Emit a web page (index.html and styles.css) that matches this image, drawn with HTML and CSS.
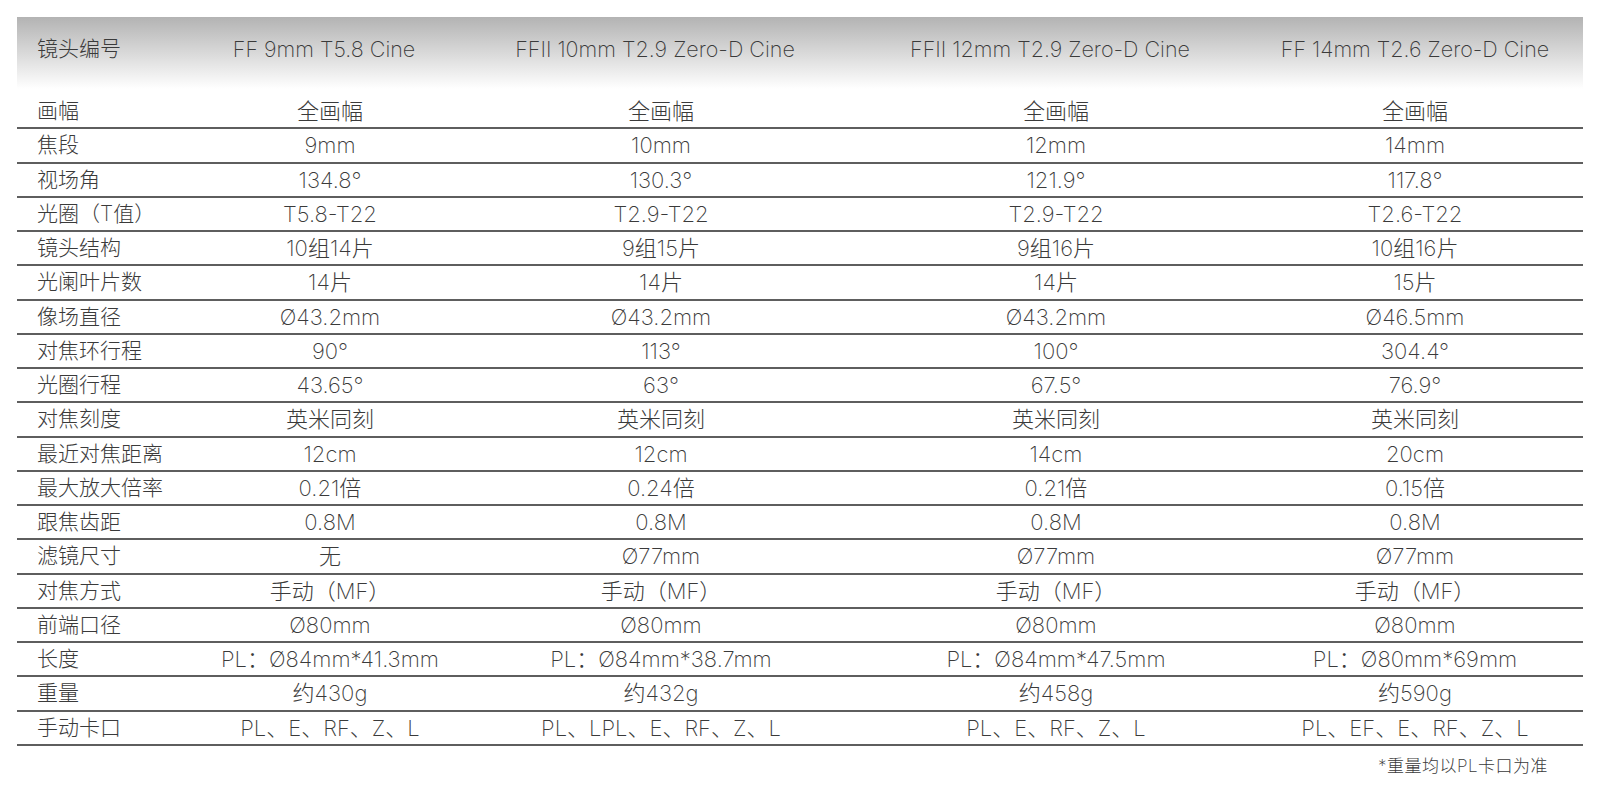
FILE: index.html
```html
<!DOCTYPE html>
<html lang="zh-CN">
<head>
<meta charset="utf-8">
<title>镜头参数</title>
<link rel="stylesheet" href="styles.css">
</head>
<body>
<div class="page">
  <div class="spec">
    <div class="row head">
      <div class="label">镜头编号</div>
      <div class="cell">FF 9mm T5.8 Cine</div>
      <div class="cell">FFII 10mm T2.9 Zero-D Cine</div>
      <div class="cell">FFII 12mm T2.9 Zero-D Cine</div>
      <div class="cell last">FF 14mm T2.6 Zero-D Cine</div>
    </div>
    <div class="row"><div class="label">画幅</div><div class="cell">全画幅</div><div class="cell">全画幅</div><div class="cell">全画幅</div><div class="cell">全画幅</div></div>
    <div class="row"><div class="label">焦段</div><div class="cell">9mm</div><div class="cell">10mm</div><div class="cell">12mm</div><div class="cell">14mm</div></div>
    <div class="row"><div class="label">视场角</div><div class="cell">134.8°</div><div class="cell">130.3°</div><div class="cell">121.9°</div><div class="cell">117.8°</div></div>
    <div class="row"><div class="label">光圈（T值）</div><div class="cell">T5.8-T22</div><div class="cell">T2.9-T22</div><div class="cell">T2.9-T22</div><div class="cell">T2.6-T22</div></div>
    <div class="row"><div class="label">镜头结构</div><div class="cell">10组14片</div><div class="cell">9组15片</div><div class="cell">9组16片</div><div class="cell">10组16片</div></div>
    <div class="row"><div class="label">光阑叶片数</div><div class="cell">14片</div><div class="cell">14片</div><div class="cell">14片</div><div class="cell">15片</div></div>
    <div class="row"><div class="label">像场直径</div><div class="cell">Ø43.2mm</div><div class="cell">Ø43.2mm</div><div class="cell">Ø43.2mm</div><div class="cell">Ø46.5mm</div></div>
    <div class="row"><div class="label">对焦环行程</div><div class="cell">90°</div><div class="cell">113°</div><div class="cell">100°</div><div class="cell">304.4°</div></div>
    <div class="row"><div class="label">光圈行程</div><div class="cell">43.65°</div><div class="cell">63°</div><div class="cell">67.5°</div><div class="cell">76.9°</div></div>
    <div class="row"><div class="label">对焦刻度</div><div class="cell">英米同刻</div><div class="cell">英米同刻</div><div class="cell">英米同刻</div><div class="cell">英米同刻</div></div>
    <div class="row"><div class="label">最近对焦距离</div><div class="cell">12cm</div><div class="cell">12cm</div><div class="cell">14cm</div><div class="cell">20cm</div></div>
    <div class="row"><div class="label">最大放大倍率</div><div class="cell">0.21倍</div><div class="cell">0.24倍</div><div class="cell">0.21倍</div><div class="cell">0.15倍</div></div>
    <div class="row"><div class="label">跟焦齿距</div><div class="cell">0.8M</div><div class="cell">0.8M</div><div class="cell">0.8M</div><div class="cell">0.8M</div></div>
    <div class="row"><div class="label">滤镜尺寸</div><div class="cell">无</div><div class="cell">Ø77mm</div><div class="cell">Ø77mm</div><div class="cell">Ø77mm</div></div>
    <div class="row"><div class="label">对焦方式</div><div class="cell">手动（MF）</div><div class="cell">手动（MF）</div><div class="cell">手动（MF）</div><div class="cell">手动（MF）</div></div>
    <div class="row"><div class="label">前端口径</div><div class="cell">Ø80mm</div><div class="cell">Ø80mm</div><div class="cell">Ø80mm</div><div class="cell">Ø80mm</div></div>
    <div class="row"><div class="label">长度</div><div class="cell">PL：Ø84mm*41.3mm</div><div class="cell">PL：Ø84mm*38.7mm</div><div class="cell">PL：Ø84mm*47.5mm</div><div class="cell">PL：Ø80mm*69mm</div></div>
    <div class="row"><div class="label">重量</div><div class="cell">约430g</div><div class="cell">约432g</div><div class="cell">约458g</div><div class="cell">约590g</div></div>
    <div class="row"><div class="label">手动卡口</div><div class="cell">PL、E、RF、Z、L</div><div class="cell">PL、LPL、E、RF、Z、L</div><div class="cell">PL、E、RF、Z、L</div><div class="cell">PL、EF、E、RF、Z、L</div></div>
  </div>
  <p class="note">*重量均以PL卡口为准</p>
</div>
</body>
</html>
```
FILE: styles.css
```css
html, body {
  margin: 0;
  padding: 0;
  background: #fff;
}
body {
  font-family: "Inter", "Noto Sans CJK SC", sans-serif;
  font-weight: 200;
  color: #3a3a3a;
}
.page {
  padding: 17px 17px 0 17px;
}
.spec {
  width: 1566px;
}
.row {
  display: grid;
  grid-template-columns: 186px 254px 408px 382px 336px;
  height: 34.26px;
  box-sizing: border-box;
  border-bottom: 2px solid #5e5e5e;
  align-items: center;
  font-size: 22px;
  line-height: 26px;
}
.row .label {
  padding-left: 20px;
  white-space: nowrap;
  font-size: 21px;
}
.row .cell {
  text-align: center;
  white-space: nowrap;
}
.row.head {
  height: 78px;
  border-bottom: none;
  align-items: start;
  background: linear-gradient(to bottom, #b3b3b3 0%, #dcdcdc 50%, #ffffff 92%);
  font-size: 21.5px;
  padding-top: 19px;
}
.row.head .label {
  font-size: 21px;
}
.row.head .cell {
  padding-right: 12px;
}
.row.head .cell.last {
  padding-right: 0;
}
.note {
  width: 1531px;
  margin: 6px 0 0 0;
  text-align: right;
  font-size: 17px;
  letter-spacing: 0.5px;
}
```
